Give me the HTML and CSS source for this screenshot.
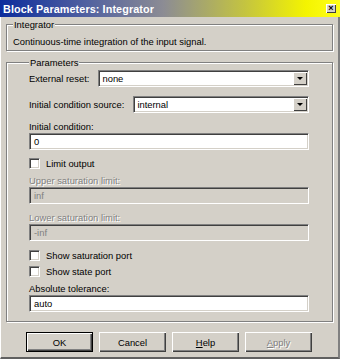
FILE: index.html
```html
<!DOCTYPE html>
<html lang="en">
<head>
  <meta charset="UTF-8" />
  <title>Block Parameters: Integrator</title>
  <link rel="stylesheet" href="styles.css">
</head>
<body>
  <div class="window">
    <!-- Title bar -->
    <div class="titlebar">
      <span class="title">Block Parameters: Integrator</span>
      <span class="close">&times;</span>
    </div>

    <div class="dialog">
      <fieldset class="group">
        <legend>Integrator</legend>
        <div class="desc">Continuous-time integration of the input signal.</div>
      </fieldset>

      <fieldset class="group params">
        <legend>Parameters</legend>

        <div class="row">
          <label>External reset:</label>
          <div class="combo"><span class="value">none</span><span class="drop"></span></div>
        </div>
        <div class="row second">
          <label>Initial condition source:</label>
          <div class="combo"><span class="value">internal</span><span class="drop"></span></div>
        </div>

        <div class="caption first">Initial condition:</div>
        <div class="field">0</div>

        <div class="check-row limit"><span class="check"></span>Limit output</div>

        <div class="caption disabled upper">Upper saturation limit:</div>
        <div class="field disabled">inf</div>
        <div class="caption disabled lower">Lower saturation limit:</div>
        <div class="field disabled">-inf</div>

        <div class="check-row sat"><span class="check"></span>Show saturation port</div>
        <div class="check-row state"><span class="check"></span>Show state port</div>

        <div class="caption abs">Absolute tolerance:</div>
        <div class="field">auto</div>
      </fieldset>

      <div class="buttons">
        <button class="btn default">OK</button>
        <button class="btn">Cancel</button>
        <button class="btn"><u>H</u>elp</button>
        <button class="btn" disabled><u>A</u>pply</button>
      </div>
    </div>
  </div>
</body>
</html>
```

FILE: styles.css
```css
* {
  box-sizing: border-box;
}

body {
  margin: 0;
  font-family: "Liberation Sans", Arial, sans-serif;
  font-size: 9.4px;
  color: #000;
  background: #d4d0c8;
}

.window {
  width: 340px;
  height: 359px;
  display: flex;
  flex-direction: column;
  background: #d4d0c8;
}

.titlebar {
  height: 17px;
  display: flex;
  align-items: center;
  padding: 0 4px 0 3px;
  background: linear-gradient(to right, #0c2c9c 0%, #5060a0 25%, #8c8c94 48%, #c4c440 72%, #f4f400 90%, #ffff18 100%);
}

.title {
  color: #fff;
  font-weight: bold;
  font-size: 10.8px;
  letter-spacing: 0.1px;
}

.close {
  margin-left: auto;
  width: 10px;
  height: 9px;
  background: #d4d0c8;
  box-shadow: inset 1px 1px 0 #fff, inset -1px -1px 0 #404040;
  font-size: 9px;
  line-height: 9px;
  text-align: center;
  font-weight: bold;
}

.dialog {
  flex: 1;
  display: flex;
  flex-direction: column;
  padding: 1px 5px 0 5px;
  border-left: 1px solid #fff;
  border-right: 2px solid #808080;
  border-bottom: 2px solid #606060;
  box-shadow: inset -1px 0 0 #d4d0c8;
}

.group {
  margin: 0;
  padding: 4px 5px 2px 6px;
  border: 1px solid #808080;
  box-shadow: 1px 1px 0 #fff, inset 1px 1px 0 #fff;
}

.group legend {
  padding: 0 1px;
  line-height: 13px;
  background: #d4d0c8;
}

.desc {
  line-height: 13px;
}

.params {
  margin-top: 5px;
  padding: 1px 23px 9px 22px;
}

.row {
  display: flex;
  align-items: center;
  gap: 9px;
}

.row.second {
  margin-top: 9px;
}

.combo {
  flex: 1;
  height: 17px;
  display: flex;
  align-items: center;
  background: #fff;
  border-top: 1px solid #808080;
  border-left: 1px solid #808080;
  border-right: 1px solid #fff;
  border-bottom: 1px solid #fff;
  box-shadow: inset 1px 1px 0 #404040, inset -1px -1px 0 #d4d0c8;
  padding: 2px 1px 2px 3px;
}

.combo .value {
  flex: 1;
}

.drop {
  width: 14px;
  height: 13px;
  background: #d4d0c8;
  box-shadow: inset 1px 1px 0 #fff, inset -1px -1px 0 #404040;
  position: relative;
}

.drop::after {
  content: "";
  position: absolute;
  left: 4px;
  top: 5px;
  border-left: 3px solid transparent;
  border-right: 3px solid transparent;
  border-top: 3px solid #000;
}

.caption {
  line-height: 12px;
}

.caption.first {
  margin-top: 8px;
}

.caption.upper {
  margin-top: 5px;
}

.caption.lower {
  margin-top: 8px;
}

.caption.abs {
  margin-top: 5px;
}

.disabled {
  color: #808080;
  text-shadow: 1px 1px 0 #fff;
}

.field {
  height: 17px;
  line-height: 13px;
  padding: 1px 4px;
  background: #fff;
  border-top: 1px solid #808080;
  border-left: 1px solid #808080;
  border-right: 1px solid #fff;
  border-bottom: 1px solid #fff;
  box-shadow: inset 1px 1px 0 #404040, inset -1px -1px 0 #d4d0c8;
}

.field.disabled {
  background: #d4d0c8;
  text-shadow: none;
}

.check-row {
  height: 14px;
  display: flex;
  align-items: center;
  gap: 6px;
}

.check-row.limit {
  margin-top: 6px;
}

.check-row.sat {
  margin-top: 7px;
}

.check-row.state {
  margin-top: 2px;
}

.check {
  width: 11px;
  height: 11px;
  background: #fff;
  border-top: 1px solid #808080;
  border-left: 1px solid #808080;
  border-right: 1px solid #fff;
  border-bottom: 1px solid #fff;
  box-shadow: inset 1px 1px 0 #404040, inset -1px -1px 0 #d4d0c8;
}

.buttons {
  display: flex;
  gap: 6px;
  margin-top: 10px;
  padding-left: 20px;
}

.btn {
  width: 67px;
  height: 20px;
  padding: 0;
  font-family: inherit;
  font-size: 9.4px;
  color: #000;
  background: #d4d0c8;
  border: none;
  box-shadow: inset 1px 1px 0 #fff, inset -1px -1px 0 #404040, inset -2px -2px 0 #808080;
}

.btn.default {
  border: 1px solid #000;
  box-shadow: inset 1px 1px 0 #fff, inset -1px -1px 0 #404040, inset -2px -2px 0 #808080;
}

.btn:disabled {
  color: #808080;
  text-shadow: 1px 1px 0 #fff;
}
```
